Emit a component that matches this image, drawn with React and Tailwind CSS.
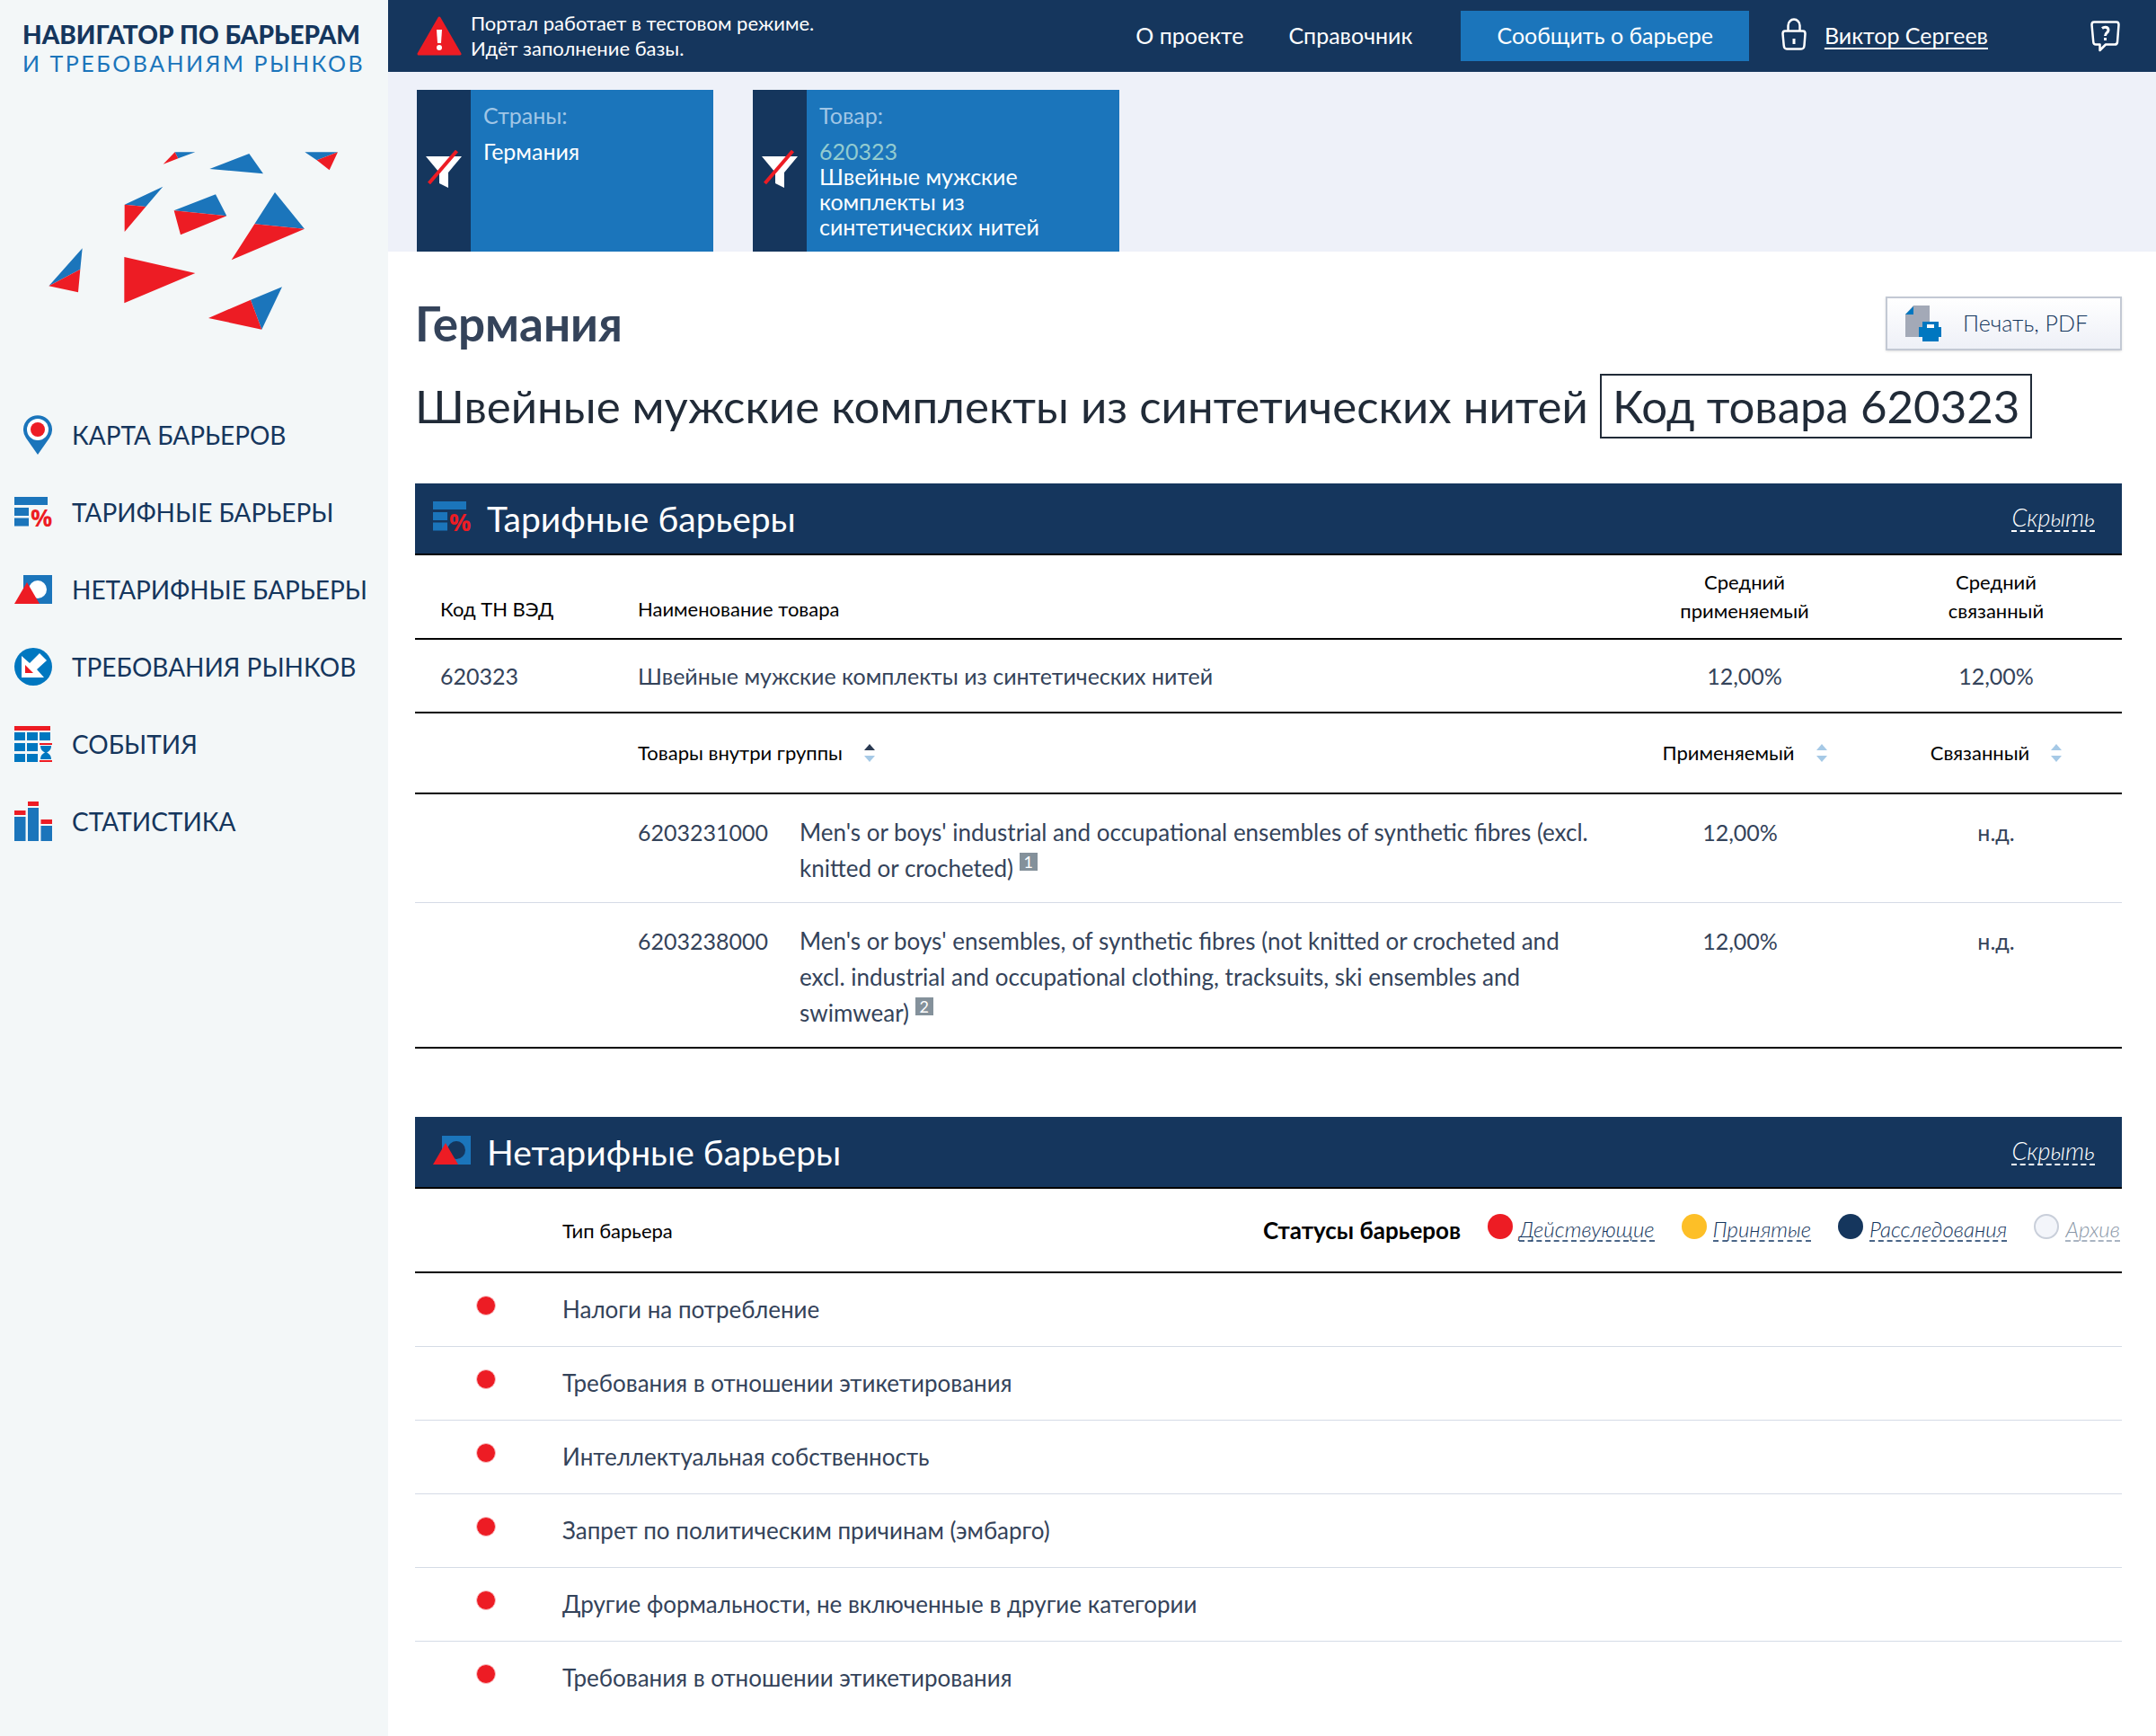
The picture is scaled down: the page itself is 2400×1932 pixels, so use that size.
import { useState } from 'react';

const PinIcon = () => (
  <svg viewBox="0 0 32 44" className="w-8 h-11">
    <path d="M16 44L3 25.500A16 16 0 1 1 29 25.500Z" fill="#1b75bb" />
    <circle cx="16" cy="16" r="12" fill="#fff" />
    <circle cx="16" cy="16" r="8" fill="#ed1c24" />
  </svg>
)

const TariffIcon = () => (
  <svg viewBox="0 0 42 34" className="w-[42px] h-[34px] overflow-visible">
    <path d="M0 0h37v9H0zM0 12h16v9H0zM0 23.500h16v9H0z" fill="#1b75bb" />
    <text x="18" y="33" fontSize="27" fontWeight="700" fontFamily="Open Sans, sans-serif" fill="#ed1c24">%</text>
  </svg>
)

const NonTariffIcon = ({ hole }) => (
  <svg viewBox="0 0 42 32" className="w-[42px] h-8">
    <path d="M10 0h32v32H10z" fill="#1b75bb" />
    <circle cx="26" cy="16" r="10" fill={hole} />
    <path d="M14 8L28 32H0z" fill="#ed1c24" />
  </svg>
)

const RequirementsIcon = () => (
  <svg viewBox="0 0 42 42" className="w-[42px] h-[42px]">
    <circle cx="21" cy="21" r="21" fill="#0077c0" />
    <path d="M28 6l8 8-11 10 8 9H8V9l9 8z" fill="#fff" />
    <path d="M12 19l9 9h-9z" fill="#ed1c24" />
  </svg>
)

const EventsIcon = () => (
  <svg viewBox="0 0 42 40" className="w-[42px] h-10">
    <path d="M0 0h40v5H0zM28 19h14v2H28zM28 38h14v2H28z" fill="#ed1c24" />
    <path d="M0 7h12v9H0zM14 7h12v9H14zM28 7h12v9H28zM0 19h12v9H0zM14 19h12v9H14zM0 31h12v9H0zM14 31h12v9H14z" fill="#0077c0" />
    <path d="M29 22h12c0 4-2 6-5 7.500 3 1.500 5 3.500 5 7.500H29c0-4 2-6 5-7.500-3-1.500-5-3.500-5-7.500z" fill="#0077c0" />
  </svg>
)

const StatsIcon = () => (
  <svg viewBox="0 0 42 44" className="w-[42px] h-11">
    <path d="M0 10h12.500v5H0zM15 0h12v5H15zM29.500 20H42v5H29.500z" fill="#ed1c24" />
    <path d="M0 17h12.500v27H0zM15 7h12v37H15zM29.500 27H42v17H29.500z" fill="#1b75bb" />
  </svg>
)

const FilterOffIcon = () => (
  <svg viewBox="0 0 40 42" className="w-10 h-[42px]">
    <path d="M0 7h40L25 25v17l-10-5V25z" fill="#fff" />
    <path d="M34.500 1L3.500 37" stroke="#ed1c24" strokeWidth="4" />
  </svg>
)

const WarningIcon = () => (
  <svg viewBox="0 0 50 44" className="w-[50px] h-11 shrink-0">
    <path d="M25 2L48 42H2z" fill="#ed1c24" stroke="#ed1c24" strokeWidth="3" strokeLinejoin="round" />
    <path d="M22 15h6l-1 15h-4z" fill="#fff" />
    <circle cx="25" cy="35" r="3" fill="#fff" />
  </svg>
)

const LockIcon = () => (
  <svg viewBox="0 0 28 36" className="w-7 h-9" fill="none" stroke="#fff" strokeWidth="2.500">
    <path d="M7.500 14V8.500a6.500 7 0 0 1 13 0V14" />
    <path d="M4 14.500h20q2.500 0 2.500 3l-1 13q-.3 4-3.500 4H6q-3 0-3.300-4L1.500 17.500q0-3 2.500-3z" />
    <path d="M14 23v6" strokeWidth="3" />
  </svg>
)

const HelpIcon = () => (
  <svg viewBox="0 0 33 35" className="w-[33px] h-[35px]" fill="none" stroke="#fff" strokeWidth="2.500" strokeLinejoin="round">
    <path d="M4 1.500h25q2.500 0 2.500 3L30 24q-.3 2.500-3 2.500H17L10.500 33v-6.500H6q-2.500 0-2.700-2.500L1.500 4.500q0-3 2.500-3z" />
    <path d="M13 8.500q1.500-1.200 3.500-1.200 3.500 0 3.500 3.200c0 3-3.500 3-3.500 6.500M16.500 19v3" strokeWidth="3" />
  </svg>
)

const PrintIcon = () => (
  <svg viewBox="0 0 40 40" className="w-10 h-10">
    <path d="M9 0h18v35H0V10z" fill="#a3a9b7" />
    <path d="M9 1v9H0z" fill="#0077c0" />
    <path d="M19 18h18v6h3v11h-3v5H19v-5h-4V24h4z" fill="#0077c0" />
    <path d="M24 21h8v4h-8z" fill="#fff" />
  </svg>
)

const LogoShards = () => (
  <svg viewBox="162 507 966 592" className="w-[322px] h-[198px]">
    <g fill="#1b75bb">
      <path d="M584 507h68l-57 21zM700 563l132-51 47 67zM1018 507h110l-70 27zM416 682l128-60-57 67zM581 702l139-54 37 72zM918 641l99 122-167-16zM275 828l-7 70-105 56zM942 957l-68 142-37-99z" />
    </g>
    <g fill="#ed1c24">
      <path d="M584 507l11 21-50 19zM1128 507l-28 60-42-33zM416 682l71 7-71 84zM581 702l176 18-154 63zM850 747l167 16-244 104zM268 898l-7 77-98-21zM415 857l237 54-237 100zM837 1000l37 99-178-38z" />
    </g>
  </svg>
)

const Sorter = ({ active }) => (
  <svg viewBox="0 0 12 20" className="w-3 h-5">
    <path d="M6 0l6 7H0z" fill={active ? '#2b3a52' : '#a6c9e6'} />
    <path d="M6 20l6-7H0z" fill="#a6c9e6" />
  </svg>
)

const menu = [
  { label: 'КАРТА БАРЬЕРОВ', icon: <PinIcon /> },
  { label: 'ТАРИФНЫЕ БАРЬЕРЫ', icon: <TariffIcon /> },
  { label: 'НЕТАРИФНЫЕ БАРЬЕРЫ', icon: <NonTariffIcon hole="#fff" /> },
  { label: 'ТРЕБОВАНИЯ РЫНКОВ', icon: <RequirementsIcon /> },
  { label: 'СОБЫТИЯ', icon: <EventsIcon /> },
  { label: 'СТАТИСТИКА', icon: <StatsIcon /> },
]

const goods = [
  {
    code: '6203231000',
    name: "Men's or boys' industrial and occupational ensembles of synthetic fibres (excl. knitted or crocheted)",
    note: 1,
  },
  {
    code: '6203238000',
    name: "Men's or boys' ensembles, of synthetic fibres (not knitted or crocheted and excl. industrial and occupational clothing, tracksuits, ski ensembles and swimwear)",
    note: 2,
  },
]

const statuses = [
  { label: 'Действующие', dot: 'bg-[#ed1c24]', text: 'text-[#15365d] border-[#4a6587]' },
  { label: 'Принятые', dot: 'bg-[#fdbf27]', text: 'text-[#15365d] border-[#4a6587]' },
  { label: 'Расследования', dot: 'bg-[#15365d]', text: 'text-[#15365d] border-[#4a6587]' },
  { label: 'Архив', dot: 'bg-[#f3f5fa] border-2 border-[#c9cfda]', text: 'text-[#8b98a8] border-[#a9b4c2]' },
]

const barriers = [
  'Налоги на потребление',
  'Требования в отношении этикетирования',
  'Интеллектуальная собственность',
  'Запрет по политическим причинам (эмбарго)',
  'Другие формальности, не включенные в другие категории',
  'Требования в отношении этикетирования',
]

const Sidebar = () => (
  <aside className="w-[432px] shrink-0 bg-[#f3f7f8]">
    <a href="#" className="block pt-5 pl-[25px]">
      <span className="block text-[28px] leading-9 font-black text-[#15365d] whitespace-nowrap">НАВИГАТОР ПО БАРЬЕРАМ</span>
      <span className="block text-[25px] leading-7 text-[#1b75bb] tracking-widest whitespace-nowrap">И ТРЕБОВАНИЯМ РЫНКОВ</span>
    </a>
    <div className="pt-[85px] pl-[54px]">
      <LogoShards />
    </div>
    <nav className="mt-[74px]">
      {menu.map((item) => (
        <a key={item.label} href="#" className="flex items-center h-[86px] pl-4">
          <span className="w-[42px] flex justify-end">{item.icon}</span>
          <span className="ml-[22px] text-[28px] text-[#15365d] whitespace-nowrap">{item.label}</span>
        </a>
      ))}
    </nav>
  </aside>
)

const TopBar = () => (
  <header className="flex items-center h-20 pl-8 pr-10 bg-[#15365d] text-white text-[25px]">
    <WarningIcon />
    <p className="ml-[10px] text-[22px] leading-7">
      Портал работает в тестовом режиме.<br />Идёт заполнение базы.
    </p>
    <nav className="ml-auto flex items-center">
      <a href="#">О проекте</a>
      <a href="#" className="ml-[50px]">Справочник</a>
      <button type="button" className="ml-[54px] h-14 px-10 bg-[#1b75bb]">Сообщить о барьере</button>
      <span className="ml-9 mb-1"><LockIcon /></span>
      <a href="#" className="ml-5 underline underline-offset-4">Виктор Сергеев</a>
      <button type="button" aria-label="Помощь" className="ml-[114px]"><HelpIcon /></button>
    </nav>
  </header>
)

const FilterCard = ({ title, width, children }) => (
  <div className={`flex h-[180px] bg-[#1b75bb] text-white text-[25px] leading-7 ${width}`}>
    <button type="button" aria-label="Сбросить фильтр" className="w-[60px] pb-1 shrink-0 flex items-center justify-center bg-[#15365d]">
      <FilterOffIcon />
    </button>
    <div className="pt-[14px] px-[14px]">
      <p className="mb-3 text-[#a0c6e6]">{title}</p>
      {children}
    </div>
  </div>
)

const SectionHeader = ({ icon, title, open, onToggle }) => (
  <div className="flex items-center h-20 pl-5 pr-[30px] bg-[#15365d] border-b-2 border-black text-white">
    <span className="mb-1">{icon}</span>
    <h3 className="ml-[18px] text-[39px]">{title}</h3>
    <button type="button" onClick={onToggle} className="ml-auto text-[27px] leading-7 font-light italic border-b-2 border-dashed border-white">
      {open ? 'Скрыть' : 'Показать'}
    </button>
  </div>
)

const TariffTable = () => (
  <table className="w-full table-fixed border-collapse text-[25px] leading-10 text-[#34435a]">
    <colgroup>
      <col className="w-[248px]" />
      <col className="w-[180px]" />
      <col />
      <col className="w-[280px]" />
      <col className="w-[280px]" />
    </colgroup>
    <thead>
      <tr className="h-[93px] border-b-2 border-black text-[22px] leading-8 text-black align-bottom">
        <th className="pl-7 pb-4 text-left font-normal">Код ТН ВЭД</th>
        <th colSpan="2" className="pb-4 text-left font-normal">Наименование товара</th>
        <th className="pb-[14px] font-normal">Средний<br />применяемый</th>
        <th className="pb-[14px] font-normal">Средний<br />связанный</th>
      </tr>
    </thead>
    <tbody>
      <tr className="h-[82px] border-b-2 border-black">
        <td className="pl-7">620323</td>
        <td colSpan="2">Швейные мужские комплекты из синтетических нитей</td>
        <td className="text-center">12,00%</td>
        <td className="text-center">12,00%</td>
      </tr>
      <tr className="h-[90px] border-b-2 border-black text-[22px] text-black">
        <td />
        <td colSpan="2">
          <button type="button" className="flex items-center gap-6">Товары внутри группы <Sorter active /></button>
        </td>
        <td>
          <button type="button" className="flex items-center gap-6 mx-auto">Применяемый <Sorter /></button>
        </td>
        <td>
          <button type="button" className="flex items-center gap-6 mx-auto">Связанный <Sorter /></button>
        </td>
      </tr>
      {goods.map((item) => (
        <tr key={item.code} className="align-top border-b border-[#d5dbe6] last:border-b-2 last:border-black">
          <td />
          <td className="pt-[22px]">{item.code}</td>
          <td className="pt-[22px] pb-[18px] pr-6 text-[26px]">
            {item.name}{' '}
            <a href="#" className="inline-block w-5 h-5 align-super text-center text-[18px] leading-5 bg-[#84919b] text-white">{item.note}</a>
          </td>
          <td className="pt-[22px] pr-[10px] text-center">12,00%</td>
          <td className="pt-[22px] text-center">н.д.</td>
        </tr>
      ))}
    </tbody>
  </table>
)

const BarrierTable = () => (
  <table className="w-full table-fixed border-collapse text-[26px] text-[#34435a]">
    <colgroup>
      <col className="w-[164px]" />
      <col />
      <col className="w-[1000px]" />
    </colgroup>
    <thead>
      <tr className="h-[93px] border-b-2 border-black text-[22px] text-black">
        <th />
        <th className="text-left font-normal">Тип барьера</th>
        <th className="font-normal">
          <div className="flex items-center justify-end pr-0.5 text-[24px]">
            <span className="text-[26px] font-bold">Статусы барьеров</span>
            {statuses.map((s) => (
              <a key={s.label} href="#" className="ml-[30px] flex items-center gap-[7px]">
                <span className={`w-7 h-7 mb-2 rounded-full ${s.dot}`} />
                <span className={`font-light italic leading-6 border-b-2 border-dashed ${s.text}`}>{s.label}</span>
              </a>
            ))}
          </div>
        </th>
      </tr>
    </thead>
    <tbody>
      {barriers.map((name, i) => (
        <tr key={i} className="h-[82px] border-b border-[#d5dbe6] last:border-b-0">
          <td className="pb-2">
            <span className="block w-[22px] h-[22px] ml-[68px] rounded-full bg-[#ed1c24] border border-[#f9c0c3]" />
          </td>
          <td colSpan="2">{name}</td>
        </tr>
      ))}
    </tbody>
  </table>
)

export default function App() {
  const [tariffOpen, setTariffOpen] = useState(true);
  const [barriersOpen, setBarriersOpen] = useState(true);

  return (
    <div className="flex min-h-screen bg-white font-['Lato','Carlito',sans-serif]">
      <Sidebar />
      <div className="flex-1 min-w-0">
        <TopBar />
        <div className="flex gap-11 pt-5 pl-8 bg-[#eef1f9]">
          <FilterCard title="Страны:" width="w-[330px]">
            <p>Германия</p>
          </FilterCard>
          <FilterCard title="Товар:" width="w-[408px]">
            <p className="text-[#92cbd0]">620323</p>
            <p>Швейные мужские комплекты из синтетических нитей</p>
          </FilterCard>
        </div>
        <main className="pl-[30px] pr-[38px] pt-[50px]">
          <div className="flex items-center justify-between">
            <h1 className="text-[53px] leading-[60px] font-bold text-[#34435a]">Германия</h1>
            <button type="button" className="flex items-center gap-6 h-[60px] pl-5 pr-9 border-2 border-[#c3c9d4] bg-linear-to-b from-white to-[#eef0f7] shadow text-[25px] font-light text-[#15365d]">
              <PrintIcon />
              Печать, PDF
            </button>
          </div>
          <h2 className="mt-[26px] text-[51px] leading-[68px] text-[#212b38]">
            Швейные мужские комплекты из синтетических нитей{' '}
            <span className="inline-block px-3 border-2 border-[#212b38]">Код товара 620323</span>
          </h2>
          <section className="mt-[50px]">
            <SectionHeader icon={<TariffIcon />} title="Тарифные барьеры" open={tariffOpen} onToggle={() => setTariffOpen(!tariffOpen)} />
            {tariffOpen && <TariffTable />}
          </section>
          <section className="mt-[76px]">
            <SectionHeader icon={<NonTariffIcon hole="#15365d" />} title="Нетарифные барьеры" open={barriersOpen} onToggle={() => setBarriersOpen(!barriersOpen)} />
            {barriersOpen && <BarrierTable />}
          </section>
        </main>
      </div>
    </div>
  );
}
